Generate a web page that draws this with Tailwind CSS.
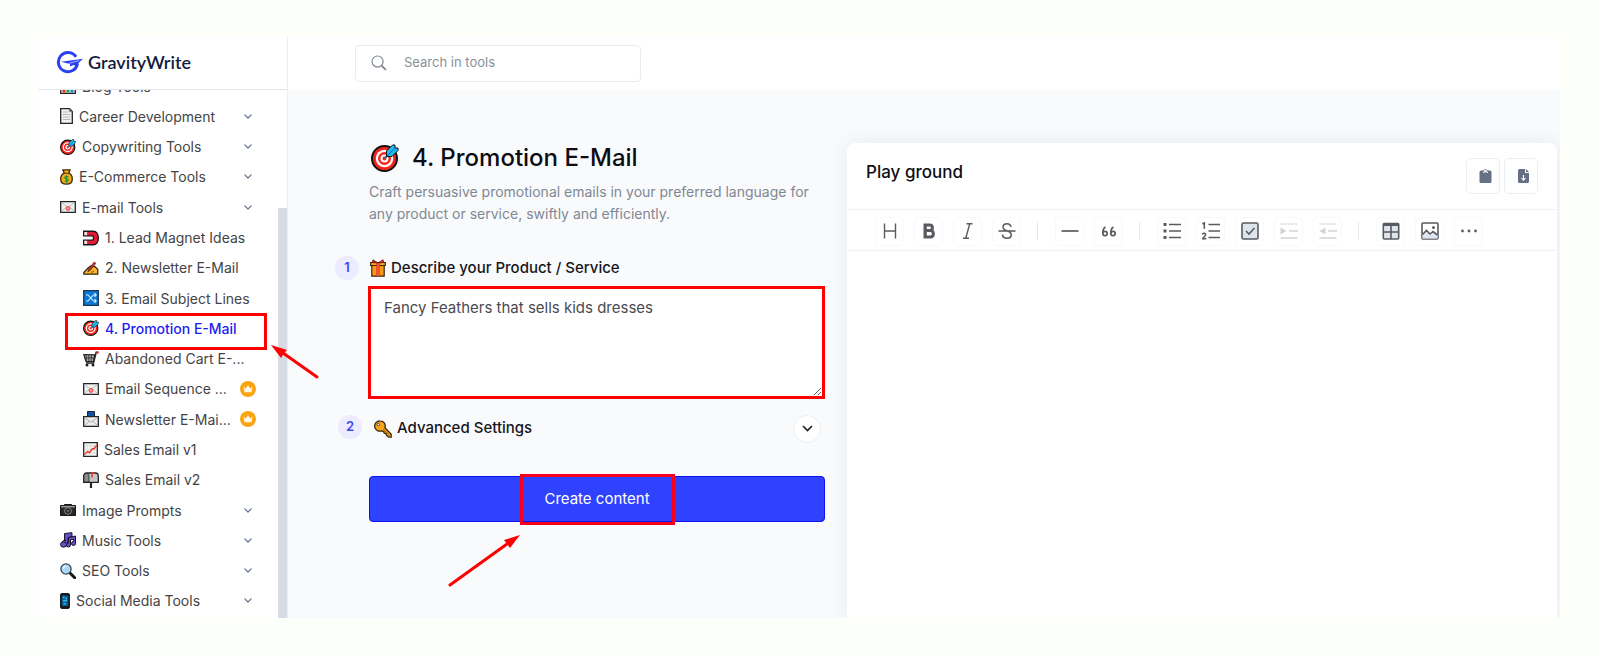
<!DOCTYPE html>
<html lang="en">
<head>
<meta charset="utf-8">
<title>GravityWrite</title>
<script src="https://cdn.jsdelivr.net/npm/@tailwindcss/browser@4"></script>
</head>
<body class="bg-[#fdfffa] font-['Inter',sans-serif] text-[#444446]">
<svg class="hidden">
  <symbol id="target" viewBox="0 0 28 28"><circle cx="13.500" cy="14.500" r="12.500" fill="#f5241b" stroke="#111" stroke-width="2"/><circle cx="13.500" cy="14.500" r="8.700" fill="#fff"/><circle cx="13.500" cy="14.500" r="6.500" fill="#f5241b"/><circle cx="13.500" cy="14.500" r="4" fill="#fff"/><circle cx="13.500" cy="14.500" r="2" fill="#f5241b"/><path d="M13.500 14.500 19 9" stroke="#1377a8" stroke-width="1.800"/><path d="M15.500 12.500V7L21.500 1H24v3h3v2.500L21 12.500z" fill="#20b8f0" stroke="#111" stroke-width="1" stroke-linejoin="round"/><path d="m16 12 9-9" stroke="#0f6f9c"/></symbol>
  <symbol id="chart" viewBox="0 0 16 16"><path d="M.7.7h14.600v14.600H.7z" fill="#f4f4f4" stroke="#222" stroke-width="1.300"/><path d="M2.500 7h3v7.500h-3z" fill="#e22"/><path d="M6.500 3h3v11.500h-3z" fill="#19a833"/><path d="M10.500 5h3v9.500h-3z" fill="#1780e0"/></symbol>
  <symbol id="page" viewBox="0 0 13 16"><path d="M.7.7h8.800l2.800 2.800v11.800H.7z" fill="#f2f2f2" stroke="#252525" stroke-width="1.300"/><path d="M2.800 4h5M2.800 6.500h7.500M2.800 9h7.500M2.800 11.500h7.500" stroke="#b7b7b7"/><path d="M9.300.9v2.800h2.800" fill="none" stroke="#777"/></symbol>
  <symbol id="money" viewBox="0 0 13 16"><path d="M3 .8h7L8.800 4.200C11 5.200 12.300 7.800 12.300 10c0 3.500-2 5.200-5.800 5.200S.7 13.500.7 10c0-2.200 1.300-4.800 3.500-5.800z" fill="#f9a80e" stroke="#3a2c12" stroke-width="1.300"/><path d="M3.500 4.300h6" stroke="#5a3b10"/><path d="M8.300 8c-.8-.8-3.500-.8-3.500.7s3.500.9 3.500 2.400-2.700 1.500-3.600.6M6.500 6.300v7.400" fill="none" stroke="#16953c" stroke-width="1.200"/></symbol>
  <symbol id="mail" viewBox="0 0 16 12"><path d="M.7.7h14.600v10.600H.7z" fill="#eef0f1" stroke="#252525" stroke-width="1.300"/><path d="m1.500 1.500 6.500 5 6.500-5M1.500 10.500l4.500-4m8.500 4-4.500-4" fill="none" stroke="#b4b4b4" stroke-width=".9"/><circle cx="8" cy="7.500" r="1.900" fill="#f99" stroke="#ef4136"/></symbol>
  <symbol id="magnet" viewBox="0 0 16 15"><path d="M.7.8h9.600c3.200 0 5 3 5 6.700s-1.800 6.700-5 6.700H.7V9.600h8.500c1.800 0 1.800-4.200 0-4.200H.7z" fill="#e41b35" stroke="#1a1a1a" stroke-width="1.400"/><path d="M1.300 1.500h2.800v3.200H1.300zM1.300 10.300h2.800v3.200H1.300z" fill="#e8e8e8"/></symbol>
  <symbol id="write" viewBox="0 0 16 14"><path d="M.8 13.200h14V8.500l-2.500-2.700-4.500-.8-3 2.300L.8 11.500z" fill="#fdb529" stroke="#2d2413" stroke-width="1.200"/><path d="m4.800 10.700 1-2.700 5.400-7 1.600 1.300-5.500 7z" fill="#ec2c25" stroke="#222" stroke-width=".7"/><path d="m8 11.500 3-1.200" stroke="#a35b09"/></symbol>
  <symbol id="shuffle" viewBox="0 0 16 16"><path d="M.7.7h14.600v14.600H.7z" fill="#0a78d6" stroke="#1d3550" stroke-width="1.300"/><path d="M3 5h2l5.500 6H13M3 11h2l5.500-6H13M11.500 3.200 13.200 5l-1.700 1.800M11.500 9.200l1.700 1.800-1.700 1.800" fill="none" stroke="#d9efff" stroke-width="1.100"/></symbol>
  <symbol id="cart" viewBox="0 0 16 16"><path d="m.8 3.500 11 .3-1.300 6.700H3z" fill="#aaa" stroke="#222" stroke-width="1.200"/><path d="M3.300 4v6M5.800 4v6M8.300 4v6M1.500 7h9.500" stroke="#333" stroke-width=".9"/><path d="M15.200 1.200h-2L10.500 12H3" fill="none" stroke="#222" stroke-width="1.500"/><circle cx="4" cy="14" r="1.500" fill="#222"/><circle cx="10" cy="14" r="1.500" fill="#222"/><circle cx="14.500" cy="1.500" r="1.200" fill="#c33"/></symbol>
  <symbol id="outbox" viewBox="0 0 16 16"><path d="M4.500.5h7v5h-7z" fill="#124fa0" stroke="#14243d"/><path d="M.7 5.700h14.600v9.600H.7z" fill="#eceeef" stroke="#252525" stroke-width="1.300"/><path d="m1.500 6.500 6.500 4.700 6.500-4.700M1.500 14.700 6 10.500m8.500 4.200L10 10.500" fill="none" stroke="#aaa"/></symbol>
  <symbol id="graph" viewBox="0 0 15 15"><path d="M.7.7h13.600v13.600H.7z" fill="#f5f5f5" stroke="#252525" stroke-width="1.300"/><path d="M4 1.500v12M7.500 1.500v12M11 1.500v12M1.500 4h12M1.500 7.500h12M1.500 11h12" stroke="#d2d6d6" stroke-width=".7"/><path d="m1.500 12.500 3-3 2 1 3-4 1.500.5 2.800-4" fill="none" stroke="#ef382d" stroke-width="1.400"/></symbol>
  <symbol id="mailbox" viewBox="0 0 16 16"><path d="M3.500 1h9c1.700 0 2.800 1.200 2.800 3v6.300H.7V4c0-1.800 1.200-3 2.800-3z" fill="#c3c6c7" stroke="#222" stroke-width="1.300"/><path d="M.9 4.500C.9 2.500 2 1.500 3.500 1.500S6 2.500 6 4.500V10H.9z" fill="#8b8b8b" stroke="#222" stroke-width=".8"/><path d="M9 5.500V1.300h2.500" fill="none" stroke="#ec3227" stroke-width="1.500"/><path d="M8 10.500V16" stroke="#222" stroke-width="2.200"/></symbol>
  <symbol id="camera" viewBox="0 0 16 12"><path d="M.5 1.500h3.300L4.500.5h7l.7 1h3.300v10H.5z" fill="#292929" stroke="#151515"/><path d="M1 2.800h14" stroke="#ccc"/><circle cx="8" cy="7" r="3.400" fill="#222" stroke="#8a8a8a"/><circle cx="8" cy="7" r="1.500" fill="#5c6068"/></symbol>
  <symbol id="music" viewBox="0 0 16 16"><g fill="#6a4fc4" stroke="#17132b"><path d="M4.500 1.500 12 .7V5l-4 .5v6a3 3 0 1 1-2-3H4.500z"/><path d="M8.500 5.500 15.500 4v7.500a2 2 0 1 1-1.800-2V7.200l-3.200.6V13a2 2 0 1 1-2-2z"/><ellipse cx="3.500" cy="12.500" rx="3" ry="2.700"/></g></symbol>
  <symbol id="search-emoji" viewBox="0 0 16 16"><path d="m9.500 9.500 5.200 5.200" stroke="#161616" stroke-width="3" stroke-linecap="round"/><circle cx="6" cy="6" r="5.100" fill="#a8d8f7" stroke="#3b4550" stroke-width="1.300"/><path d="M3.300 6A3 3 0 0 1 6 3.200" fill="none" stroke="#edf8ff" stroke-width="1.300"/></symbol>
  <symbol id="phone" viewBox="0 0 10 16"><rect x=".6" y=".6" width="8.800" height="14.800" rx="1" fill="#151a20" stroke="#111"/><path d="M1.800 2.500h6.400v10.500H1.800z" fill="#0b5d91"/><path d="M3 3.500h1.500v2H3zM5.500 4.500H7v2H5.500zM3 7h4v1.500H3zM3.500 10H6v1.500H3.500z" fill="#20b9f4"/></symbol>
  <symbol id="gift" viewBox="0 0 16 18"><path d="M1.800 6h12.400v11.200H1.800z" fill="#f79c12" stroke="#3a2613" stroke-width="1.200"/><path d="M.7 3.500h14.600V6.500H.7z" fill="#f9ab20" stroke="#3a2613" stroke-width="1.200"/><path d="M6.300 4h3.400v12.700H6.300z" fill="#ee2e20"/><path d="M8 4 3 .8 2.300 3.500zm0 0 5-3.200.7 2.700z" fill="#ee2e20" stroke="#5d1410" stroke-width=".8"/><path d="M8 4v13" stroke="#ff8b70" stroke-width=".8"/></symbol>
  <symbol id="key" viewBox="0 0 18 18"><path d="M6 .8a5.200 5.200 0 1 0 1.600 10.100l2 .5.5 1.800 1.800.3.500 1.800 2.500 1.900h2.300v-3.100L10.900 7.700A5.200 5.200 0 0 0 6 .8z" fill="#f9a51a" stroke="#372714" stroke-width="1.300" stroke-linejoin="round"/><circle cx="4.300" cy="4.500" r="1.300" fill="#fff" stroke="#372714" stroke-width=".8"/><path d="m9.500 9.500 6 5.500" stroke="#965800"/></symbol>
  <symbol id="crown" viewBox="0 0 16 16"><circle cx="8" cy="8" r="8" fill="#faa50f"/><path d="m3.500 5.500 2.300 2L8 4.300l2.200 3.200 2.300-2-1 5.700h-7z" fill="#fff8e8"/></symbol>
  <symbol id="down" viewBox="0 0 8 5"><path d="m.8.8 3.200 3.200L7.200.8" fill="none" stroke="currentColor" stroke-width="1.200" stroke-linecap="round" stroke-linejoin="round"/></symbol>
</svg>

<div class="flex min-h-screen pt-9 pr-10 pb-[37px] pl-[38px]">
  <aside class="relative z-10 flex w-[250px] shrink-0 flex-col border-r border-[#eceef2] bg-white">
    <a href="#" class="flex h-[54px] shrink-0 items-center gap-[5px] border-b border-[#e4e6ea] pl-[18px] text-[#121b3d]">
      <svg class="h-6 w-[27px]" viewBox="0 0 27 24"><path d="M20 5.800A9.600 9.600 0 1 0 21.500 12.500" fill="none" stroke="#2d3ff5" stroke-width="3"/><path d="M5 10.700 27 7.800 22.500 12l-1.700 3.500-3.300-1.500-3.500 1.500v-2.500z" fill="#2d3ff5"/><path d="M13 12.300 23 9.500" stroke="#fff" stroke-width=".6"/></svg>
      <span class="font-['Lato',sans-serif] text-[18px] font-semibold">GravityWrite</span>
    </a>
    <nav aria-label="Tools" class="relative h-0 min-h-[528px] flex-1 overflow-x-visible overflow-y-clip">
      <div class="absolute top-[118px] right-0 bottom-0 w-[9px] bg-[#d7dbe4]"></div>
      <ul class="-mt-[19px] flex h-[calc(100%+17px)] flex-col pr-[35px] text-[14px] [&_svg]:shrink-0 [&>li]:flex [&>li]:flex-1 [&>li]:items-center [&>li>a]:flex [&>li>a]:flex-1 [&>li>a]:items-center [&>li>a]:gap-[6px] [&>li>a]:whitespace-nowrap">
        <li class="pl-[22px]"><a href="#"><svg class="size-4"><use href="#chart"/></svg>Blog Tools</a></li>
        <li class="pl-[22px]"><a href="#"><svg class="h-4 w-[13px]"><use href="#page"/></svg>Career Development</a><svg class="h-[5px] w-2 text-[#64748b]"><use href="#down"/></svg></li>
        <li class="pl-[22px]"><a href="#"><svg class="size-4"><use href="#target"/></svg>Copywriting Tools</a><svg class="h-[5px] w-2 text-[#64748b]"><use href="#down"/></svg></li>
        <li class="pl-[22px]"><a href="#"><svg class="h-4 w-[13px]"><use href="#money"/></svg>E-Commerce Tools</a><svg class="h-[5px] w-2 text-[#64748b]"><use href="#down"/></svg></li>
        <li class="pl-[22px]"><a href="#"><svg class="h-3 w-4"><use href="#mail"/></svg>E-mail Tools</a><svg class="h-[5px] w-2 text-[#64748b]"><use href="#down"/></svg></li>
        <li class="pl-[45px]"><a href="#"><svg class="size-4"><use href="#magnet"/></svg>1. Lead Magnet Ideas</a></li>
        <li class="pl-[45px]"><a href="#"><svg class="size-4"><use href="#write"/></svg>2. Newsletter E-Mail</a></li>
        <li class="pl-[45px]"><a href="#"><svg class="size-4"><use href="#shuffle"/></svg>3. Email Subject Lines</a></li>
        <li class="relative pl-[45px]"><a href="#" aria-current="page" class="font-medium text-[#1d1df2]"><svg class="size-4"><use href="#target"/></svg>4. Promotion E-Mail</a>
          <span class="absolute top-0 left-[27px] h-[37px] w-[202px] border-3 border-[#f00]"></span>
          <svg class="absolute top-[31px] left-[233px] h-[36px] w-[50px]" viewBox="0 0 50 36"><path d="M12 9 46 33" stroke="#f00" stroke-width="3" stroke-linecap="round"/><path d="m0 1 16 5-3 3-3 5z" fill="#f00"/></svg></li>
        <li class="pl-[45px]"><a href="#"><svg class="size-4"><use href="#cart"/></svg>Abandoned Cart E-...</a></li>
        <li class="-mr-1 pl-[45px]"><a href="#"><svg class="h-3 w-4"><use href="#mail"/></svg>Email Sequence ...</a><svg class="size-4"><use href="#crown"/></svg></li>
        <li class="-mr-1 pl-[45px]"><a href="#"><svg class="size-4"><use href="#outbox"/></svg>Newsletter E-Mai...</a><svg class="size-4"><use href="#crown"/></svg></li>
        <li class="pl-[45px]"><a href="#"><svg class="size-[15px]"><use href="#graph"/></svg>Sales Email v1</a></li>
        <li class="pl-[45px]"><a href="#"><svg class="size-4"><use href="#mailbox"/></svg>Sales Email v2</a></li>
        <li class="pl-[22px]"><a href="#"><svg class="h-3 w-4"><use href="#camera"/></svg>Image Prompts</a><svg class="h-[5px] w-2 text-[#64748b]"><use href="#down"/></svg></li>
        <li class="pl-[22px]"><a href="#"><svg class="size-4"><use href="#music"/></svg>Music Tools</a><svg class="h-[5px] w-2 text-[#64748b]"><use href="#down"/></svg></li>
        <li class="pl-[22px]"><a href="#"><svg class="size-4"><use href="#search-emoji"/></svg>SEO Tools</a><svg class="h-[5px] w-2 text-[#64748b]"><use href="#down"/></svg></li>
        <li class="pl-[22px]"><a href="#"><svg class="h-4 w-[10px]"><use href="#phone"/></svg>Social Media Tools</a><svg class="h-[5px] w-2 text-[#64748b]"><use href="#down"/></svg></li>
      </ul>
    </nav>
  </aside>

  <div class="flex min-w-0 flex-1 flex-col bg-[#f9fafc]">
    <header class="flex h-[54px] shrink-0 items-center bg-white pl-[67px]">
      <label class="flex h-[37px] w-[286px] items-center gap-[17px] rounded-[4px] border border-[#e9ebee] pl-[15px]">
        <svg class="size-4 text-[#7d858d]" viewBox="0 0 17 17" fill="none" stroke="currentColor"><circle cx="7" cy="7" r="5.900" stroke-width="1.200"/><path d="m11.500 11.500 4.300 4.300" stroke-width="2"/></svg>
        <input type="search" aria-label="Search in tools" placeholder="Search in tools" class="min-w-0 flex-1 bg-transparent text-[13px] outline-none placeholder:text-[#899198]">
      </label>
    </header>

    <main class="grid flex-1 grid-cols-[49fr_71fr] gap-x-[22px] overflow-x-clip pt-[53px] pr-[3px] pl-[47px]">
      <section>
        <div class="pl-[34px]">
          <h1 class="flex h-[29px] items-center gap-[13px] pl-[2px] text-[24px] font-medium text-[#0c0c14]"><svg class="size-7"><use href="#target"/></svg>4. Promotion E-Mail</h1>
          <p class="mt-[9px] text-[14px] leading-[22px] text-[#7f8893]">Craft persuasive promotional emails in your preferred language for any product or service, swiftly and efficiently.</p>
        </div>
        <div class="mt-[31px] flex h-6 items-center">
          <span class="flex size-6 items-center justify-center rounded-full bg-[#ecebff] text-[13px] font-semibold text-[#4048f5]">1</span>
          <label for="product" class="ml-[11px] flex items-center gap-[5px] text-[15px] font-medium text-[#16161c]"><svg class="h-[18px] w-4"><use href="#gift"/></svg>Describe your Product / Service</label>
        </div>
        <textarea id="product" class="mt-[6px] ml-[33px] block h-[113px] w-[calc(100%-33px)] border-3 border-[#f00] bg-white px-[13px] py-2 text-[15px] leading-[22px] text-[#4b4b4f] outline-none">Fancy Feathers that sells kids dresses</textarea>
        <div class="mt-[15px] flex h-[29px] items-center pr-1 pl-[3px]">
          <span class="mb-1 flex size-6 items-center justify-center rounded-full bg-[#ecebff] text-[13px] font-semibold text-[#4048f5]">2</span>
          <span class="ml-3 flex flex-1 items-center gap-[5px] text-[15px] font-medium text-[#16161c]"><svg class="size-[18px]"><use href="#key"/></svg>Advanced Settings</span>
          <button type="button" aria-label="Expand advanced settings" class="flex size-7 items-center justify-center rounded-full border border-[#eceef0] bg-white text-[#222]"><svg class="h-[7px] w-[11px]" viewBox="0 0 11 7"><path d="m1 1 4.500 4.500L10 1" fill="none" stroke="currentColor" stroke-width="1.700"/></svg></button>
        </div>
        <div class="relative mt-[33px] pl-[34px]">
          <button type="button" class="h-[46px] w-full rounded-[4px] border border-[#0d10ee] bg-[#2f42ff] text-[15px] text-white">Create content</button>
          <div class="pointer-events-none absolute -top-[2px] right-0 left-[34px] flex justify-center">
            <span class="relative h-[51px] w-[155px] border-3 border-[#f4001c]">
              <svg class="absolute top-[57px] -left-[76px] h-[53px] w-[73px]" viewBox="0 0 73 53"><path d="M3 51 60 10" stroke="#f00" stroke-width="3" stroke-linecap="round"/><path d="M73 1 63 14l-3-4-3-4z" fill="#f00"/></svg>
            </span>
          </div>
        </div>
      </section>

      <section class="flex flex-col rounded-t-lg bg-white shadow-[0_0_18px_rgba(70,85,100,0.10)] [clip-path:inset(-30px_-30px_0_-30px)]">
        <div class="flex h-[67px] shrink-0 items-start justify-between border-b border-[#eff1f4] pt-[15px] pr-[19px] pl-[19px]">
          <h2 class="mt-[2px] text-[17px] leading-6 font-medium text-[#0d0d14]">Play ground</h2>
          <div class="flex gap-[4px] text-[#667085]">
            <button type="button" aria-label="Copy" class="flex h-9 w-[34px] items-center justify-center rounded-[5px] border border-[#eceef1] pl-[4px]"><svg class="h-[14px] w-[13px]" viewBox="0 0 13 14"><path d="M2 1.500h2V4h5V1.500h2q1.500 0 1.500 1.500v9.500q0 1.500-1.500 1.500H2Q.5 14 .5 12.500V3Q.5 1.500 2 1.500z" fill="currentColor"/><rect x="4.400" y=".8" width="4.200" height="2.500" rx="1" fill="#fff" stroke="currentColor" stroke-width=".8"/></svg></button>
            <button type="button" aria-label="Download" class="flex h-9 w-[34px] items-center justify-center rounded-[5px] border border-[#eceef1] pl-[4px]"><svg class="h-[14px] w-[11px]" viewBox="0 0 11 14"><path d="M1.500 0H7v4h4v8.500q0 1.500-1.500 1.500h-8Q0 14 0 12.500v-11Q0 0 1.500 0zM8 0l3 3H8z" fill="currentColor"/><path d="M5.500 6v5M3.500 9l2 2.200 2-2.200" fill="none" stroke="#fff" stroke-width="1.100"/></svg></button>
          </div>
        </div>
        <div role="toolbar" aria-label="Formatting" class="flex h-[41px] shrink-0 items-center gap-[10px] border-b border-[#eff1f4] pt-[2px] pl-[28px] text-[#5c5a60] [&>button]:flex [&>button]:size-[29px] [&>button]:shrink-0 [&>button]:items-center [&>button]:justify-center [&>button]:rounded-[4px] [&>button]:border [&>button]:border-[#f8f9fa] [&>i]:mr-[7px] [&>i]:ml-[6px] [&>i]:h-[18px] [&>i]:w-px [&>i]:bg-[#e7e9ec] [&_svg]:size-[18px]">
          <button type="button" aria-label="Heading"><svg viewBox="0 0 18 18" fill="none" stroke="currentColor" stroke-width="1.400"><path d="M3.500 1.500v15M14.500 1.500v15M3.500 9h11"/></svg></button>
          <button type="button" aria-label="Bold"><svg viewBox="0 0 18 18" fill="none" stroke="currentColor" stroke-width="3"><path d="M5 3h4.700c3.600 0 3.600 5.500 0 5.500H5h5.300c4.100 0 4.100 6.500 0 6.500H5zM5.300 2v14"/></svg></button>
          <button type="button" aria-label="Italic"><svg viewBox="0 0 18 18" fill="none" stroke="currentColor" stroke-width="1.400"><path d="M7.500 1.700h6M4 16.300h6M10.700 2 6.800 16"/></svg></button>
          <button type="button" aria-label="Strikethrough"><svg viewBox="0 0 18 18" fill="none" stroke="currentColor" stroke-width="1.500"><path d="M13 5C12.700 3 11.200 1.800 9 1.800S5 3 5 5.200C5 9.500 13.300 8 13.300 12.500c0 2.500-1.800 3.800-4.300 3.800S4.700 15 4.500 12.600M.5 9h17"/></svg></button>
          <i></i>
          <button type="button" aria-label="Line"><svg viewBox="0 0 18 18" stroke="currentColor" stroke-width="1.700"><path d="M.5 9h17"/></svg></button>
          <button type="button" aria-label="Blockquote"><svg viewBox="0 0 18 18" fill="none" stroke="currentColor" stroke-width="1.700"><circle cx="5" cy="11.500" r="2.200"/><circle cx="13" cy="11.500" r="2.200"/><path d="M2.800 11.500C2.800 8.500 3.500 6 5.500 5M10.800 11.500c0-3 .7-5.500 2.700-6.500"/></svg></button>
          <i></i>
          <button type="button" aria-label="Unordered list"><svg viewBox="0 0 18 18" stroke="currentColor" stroke-width="1.700"><path d="M6 2.500h12M6 9h12M6 15.500h12"/><path d="M.5 2.500h3M.5 9h3M.5 15.500h3" stroke-width="3"/></svg></button>
          <button type="button" aria-label="Ordered list"><svg viewBox="0 0 18 18" fill="none" stroke="currentColor" stroke-width="1.600"><path d="M6.500 2.500H18M6.500 9H18M6.500 15.500H18M.5 2 2.300.8v6M.3 12.500c.5-1.700 3.400-1.600 3.200.2C3.400 14 1.500 15.500.5 16.800h3.800"/></svg></button>
          <button type="button" aria-label="Task"><svg viewBox="0 0 18 18" fill="none" stroke="currentColor" stroke-width="1.600"><rect x="1" y="1" width="16" height="16" rx="1.500" fill="#dde5ef"/><path d="m5 9 3 3 5.500-6"/></svg></button>
          <button type="button" aria-label="Indent" class="text-[#d3d3d5]"><svg viewBox="0 0 18 18" fill="none" stroke="currentColor" stroke-width="1.500"><path d="M.5 2h17" stroke-dasharray="1.500 1"/><path d="M9 9h9M.5 16h17"/><path d="M.5 5.500 6.500 9l-6 3.500z" fill="currentColor" stroke="none"/></svg></button>
          <button type="button" aria-label="Outdent" class="text-[#d3d3d5]"><svg viewBox="0 0 18 18" fill="none" stroke="currentColor" stroke-width="1.500"><path d="M.5 2h17" stroke-dasharray="1.500 1"/><path d="M9 9h9M.5 16h17"/><path d="M6.500 5.500.5 9l6 3.500z" fill="currentColor" stroke="none"/></svg></button>
          <i></i>
          <button type="button" aria-label="Insert table"><svg viewBox="0 0 18 18" fill="none" stroke="currentColor" stroke-width="1.600"><rect x="1.300" y="1.500" width="15.400" height="15.500" rx="1" fill="#dde5ef"/><path d="M1 2.500h16" stroke-width="3"/><path d="M9 3v14M1.500 10h15"/></svg></button>
          <button type="button" aria-label="Insert image"><svg viewBox="0 0 18 18" fill="none" stroke="currentColor" stroke-width="1.600"><rect x="1" y="1" width="16" height="16" rx="1"/><path d="m1.500 12.500 4-4 3.500 3.500 3-2.500 4.500 3.500v3.500h-15z" fill="#dde5ef" stroke="none"/><path d="m1.500 12.500 4-4 3.500 3.500 3-2.500 4.500 3.500"/><circle cx="12.500" cy="5.500" r="1.500" fill="currentColor" stroke="none"/></svg></button>
          <button type="button" aria-label="More"><svg viewBox="0 0 18 18" fill="currentColor"><circle cx="2.500" cy="9" r="1.400"/><circle cx="9" cy="9" r="1.400"/><circle cx="15.500" cy="9" r="1.400"/></svg></button>
        </div>
        <div contenteditable="true" role="textbox" aria-multiline="true" aria-label="Play ground editor" class="flex-1 outline-none"></div>
      </section>
    </main>
  </div>
</div>
</body>
</html>
